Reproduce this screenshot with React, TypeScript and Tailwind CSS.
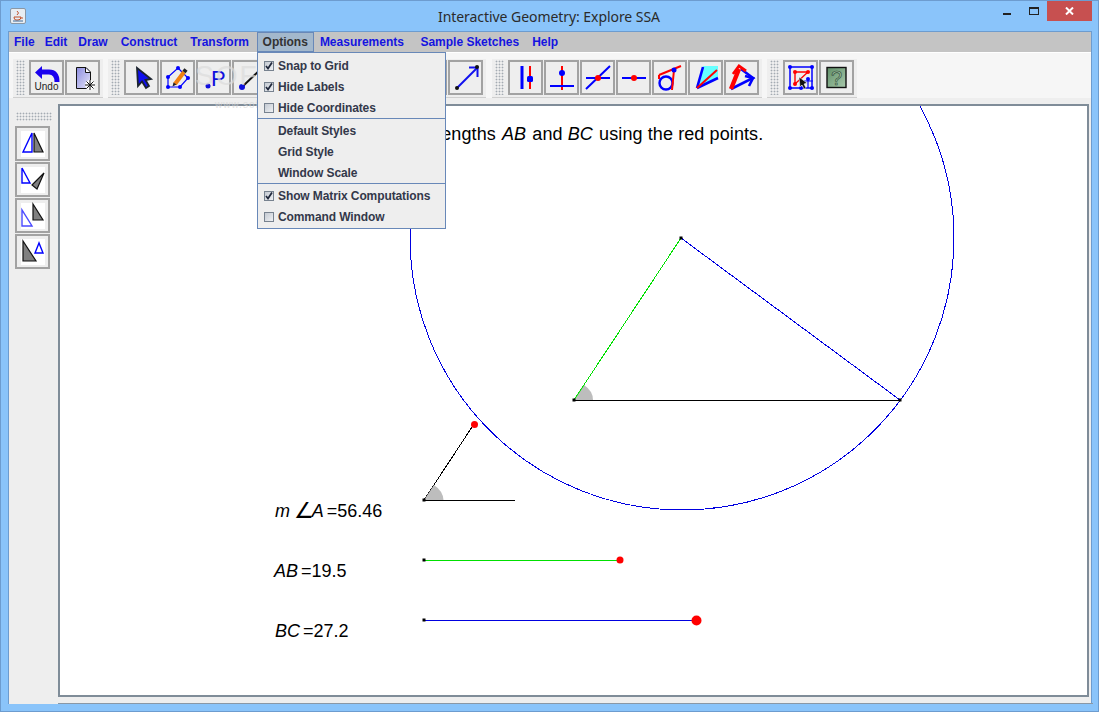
import React from "react";

const BLUE = "#0000ff";
const RED = "#ff0000";

function Icon({ children }: { children: React.ReactNode }) {
  return (
    <svg width="31" height="31" viewBox="0 0 31 31" className="block">
      {children}
    </svg>
  );
}

function ToolButton({ children }: { children?: React.ReactNode }) {
  return (
    <div className="relative h-[35px] w-[35px] shrink-0 border-2 border-[#a2a2a2] bg-[#eeeeee]">
      {children}
    </div>
  );
}

function Handle({ className }: { className: string }) {
  return (
    <div
      className={`bg-[radial-gradient(circle,#a4abb2_0.8px,transparent_1.1px)] bg-[length:3px_3px] ${className}`}
    />
  );
}

function ToolGroup({ children, className = "" }: { children: React.ReactNode; className?: string }) {
  return (
    <div className={`flex h-[40px] items-start gap-[1px] border-b-2 border-[#cfcfcf] bg-[#eeeeee] px-[3px] pt-[1px] ${className}`}>
      <Handle className="mr-[3px] h-[35px] w-[9px] shrink-0" />
      {children}
    </div>
  );
}

function UndoIcon() {
  return (
    <div className="relative h-full w-full">
      <Icon>
        <path d="M11 10 H18 Q26 10 26 20" fill="none" stroke="#1a00ee" strokeWidth="5" />
        <polygon points="4,10.5 11,4 11,17" fill="#1a00ee" />
      </Icon>
      <span className="absolute bottom-[1px] left-0 w-full text-center text-[10px] leading-[11px] text-[#222]">
        Undo
      </span>
    </div>
  );
}

function NewIcon() {
  return (
    <Icon>
      <defs>
        <linearGradient id="docFill" x1="0" y1="0" x2="1" y2="1">
          <stop offset="0" stopColor="#8c8ce0" />
          <stop offset="1" stopColor="#e6e6f8" />
        </linearGradient>
      </defs>
      <path d="M9.5 5.5 H19 L23.5 10 V26.5 H9.5 Z" fill="url(#docFill)" stroke="#111" />
      <path d="M18.5 6 V10.5 H23" fill="#fff" stroke="#111" />
      <circle cx="23" cy="23" r="5" fill="#fff" />
      <path d="M23 18 V28 M18 23 H28 M19.5 19.5 L26.5 26.5 M26.5 19.5 L19.5 26.5" stroke="#111" />
    </Icon>
  );
}

function CursorIcon() {
  return (
    <Icon>
      <path d="M11 6 L12 24 L16 19.5 L20 26 L23 24 L19.5 18 L25 17 Z" fill="#1010ee" stroke="#1c2430" strokeWidth="1.8" />
    </Icon>
  );
}

function PolygonIcon() {
  return (
    <Icon>
      <polygon points="16,6 26,16 18,25 6,25 6,15" fill="none" stroke={BLUE} strokeWidth="1.2" />
      {[[16, 6], [26, 16], [18, 25], [6, 25], [6, 15]].map(([x, y]) => (
        <circle key={`${x}-${y}`} cx={x} cy={y} r="2" fill={BLUE} />
      ))}
      <path d="M13 22 L22 10" stroke="#f08010" strokeWidth="4" />
      <path d="M22 10 L24 7.5" stroke="#222" strokeWidth="4" />
      <polygon points="10.5,24.5 11.5,20.5 14.5,22.5" fill="#222" />
    </Icon>
  );
}

function PointIcon() {
  return (
    <Icon>
      <circle cx="10" cy="24" r="2.5" fill="#1010dd" />
      <text x="13" y="24" fontSize="22" fill="#1010dd" fontFamily="Liberation Sans, sans-serif">
        P
      </text>
    </Icon>
  );
}

function LineIcon() {
  return (
    <Icon>
      <path d="M8 25 L30 4" stroke="#111" strokeWidth="2" />
      <circle cx="8" cy="25" r="3" fill="#1010dd" />
    </Icon>
  );
}

function ArrowIcon() {
  return (
    <Icon>
      <path d="M7 26 L27 6" stroke="#1010ee" strokeWidth="2" />
      <path d="M19 5.5 H27.5 V15" fill="none" stroke="#1010ee" strokeWidth="2" />
      <circle cx="7" cy="26" r="2" fill="#111" />
      <circle cx="27" cy="5" r="2" fill="#111" />
    </Icon>
  );
}

function ParallelIcon() {
  return (
    <Icon>
      <path d="M12 4 V27" stroke={BLUE} strokeWidth="3" />
      <path d="M20 4 V27" stroke={RED} strokeWidth="2" />
      <rect x="17" y="14" width="6" height="6" rx="1.5" fill={BLUE} />
    </Icon>
  );
}

function PerpIcon() {
  return (
    <Icon>
      <path d="M16 4 V28" stroke={RED} strokeWidth="2" />
      <path d="M4 24 H28" stroke={BLUE} strokeWidth="2" />
      <circle cx="16" cy="11" r="3" fill={BLUE} />
    </Icon>
  );
}

function IntersectIcon() {
  return (
    <Icon>
      <path d="M4 16 H28 M4 27 L28 4" stroke={BLUE} strokeWidth="2" />
      <circle cx="16" cy="16" r="3" fill={RED} />
    </Icon>
  );
}

function MidpointIcon() {
  return (
    <Icon>
      <path d="M4 16 H28" stroke={BLUE} strokeWidth="2" />
      <circle cx="16" cy="16" r="3" fill={RED} />
    </Icon>
  );
}

function TangentIcon() {
  return (
    <Icon>
      <circle cx="12" cy="21" r="6.5" fill="none" stroke={BLUE} strokeWidth="2.4" />
      <path d="M5 13 L27 4 M5 13 V17 M20 8 L18 28" stroke={RED} strokeWidth="2" fill="none" />
      <circle cx="20" cy="8" r="2.5" fill={BLUE} />
    </Icon>
  );
}

function BisectorIcon() {
  return (
    <Icon>
      <polygon points="7,26 13,4 28,4 28,16" fill="#66ffff" />
      <path d="M7 26 L13 5 M7 26 L28 16" stroke={BLUE} strokeWidth="2.6" />
      <path d="M7 26 L27 8" stroke={RED} strokeWidth="2" />
    </Icon>
  );
}

function VectorSumIcon() {
  return (
    <Icon>
      <path d="M5 27 L27 16 L15 7" fill="none" stroke={BLUE} strokeWidth="2.6" />
      <path d="M19 14 L27 16 L23 24" fill="none" stroke={BLUE} strokeWidth="2.6" />
      <path d="M5 27 L13 7" stroke={RED} strokeWidth="4.4" />
      <path d="M7 12 L13 4 L20 9" fill="none" stroke={RED} strokeWidth="2.8" />
    </Icon>
  );
}

function MatrixIcon() {
  return (
    <Icon>
      <rect x="5" y="5" width="22" height="21" fill="none" stroke={BLUE} strokeWidth="1.5" />
      {[[5, 5], [27, 5], [5, 26], [27, 26], [16, 26]].map(([x, y]) => (
        <circle key={`${x}-${y}`} cx={x} cy={y} r="2" fill={BLUE} />
      ))}
      <polygon points="10,10 23,10 10,22" fill="none" stroke={RED} strokeWidth="1.4" />
      {[[10, 10], [23, 10], [10, 22]].map(([x, y]) => (
        <circle key={`${x}-${y}`} cx={x} cy={y} r="2" fill={RED} />
      ))}
      <path d="M23 26 V17 M19 19 H28" stroke={BLUE} strokeWidth="1.2" />
      <circle cx="23" cy="17" r="2" fill={BLUE} />
      <path d="M14 15 L15 25 L17 23 L19 27 L21 26 L19 22 L22 21 Z" fill="#111" stroke="#fff" strokeWidth="0.5" />
    </Icon>
  );
}

function HelpIcon() {
  return (
    <Icon>
      <defs>
        <linearGradient id="helpFill" x1="0" y1="0" x2="1" y2="1">
          <stop offset="0" stopColor="#5f8f68" />
          <stop offset="1" stopColor="#a9c9ac" />
        </linearGradient>
      </defs>
      <rect x="6" y="5.5" width="19" height="20" fill="url(#helpFill)" stroke="#111" strokeWidth="1.4" />
      <text x="15.5" y="23" textAnchor="middle" fontSize="20" fill="#9dc0a0" stroke="#2c4634" strokeWidth="0.6" fontFamily="Liberation Sans, sans-serif">
        ?
      </text>
    </Icon>
  );
}

function SideIcon({ points }: { points: { tri: string; gray?: boolean; faint?: boolean }[] }) {
  return (
    <Icon>
      <rect x="4" y="3" width="24" height="26" fill="#fff" />
      {points.map((p) => (
        <polygon
          key={p.tri}
          points={p.tri}
          fill={p.gray ? "#808080" : "none"}
          stroke={p.gray ? "#111" : p.faint ? "#4a4aff" : BLUE}
          strokeWidth={p.gray ? 1.2 : 1.4}
        />
      ))}
    </Icon>
  );
}

function CheckBox({ checked }: { checked?: boolean }) {
  return (
    <span className="relative block h-[10px] w-[10px] border border-[#77828f] bg-[linear-gradient(135deg,#c4cad2,#eef0f3)]">
      {checked && (
        <svg width="8" height="8" viewBox="0 0 8 8" className="absolute left-0 top-0">
          <path d="M1 4 L3 6.5 L7 0.5" fill="none" stroke="#20283c" strokeWidth="1.7" />
        </svg>
      )}
    </span>
  );
}

function MenuItem({ label, check }: { label: string; check?: "on" | "off" }) {
  return (
    <div className="flex h-[21px] items-center pl-[6px] text-[#33384a]">
      <span className="flex w-[14px] shrink-0 justify-start">
        {check && <CheckBox checked={check === "on"} />}
      </span>
      <span>{label}</span>
    </div>
  );
}

export default function App() {
  return (
    <div className="relative h-[712px] w-[1099px] overflow-hidden border border-[#6d9ccf] bg-[#8ac4fa] font-['Liberation_Sans',sans-serif]">
      {/* title bar */}
      <div className="relative flex h-[30px] items-center">
        <div className="ml-[9px] flex h-[16px] w-[16px] items-center justify-center rounded-[2px] border border-[#8a97a5] bg-[#e8edf2]">
          <svg width="12" height="12" viewBox="0 0 12 12">
            <path d="M5 1 Q8 3 5 5 M2 7 H9 Q9 10 6 10 H4 Q2 10 2 7 M9 8 H11" fill="none" stroke="#c0502a" strokeWidth="1" />
            <path d="M1 11 H11" stroke="#3c6a9a" strokeWidth="1" />
          </svg>
        </div>
        <div className="absolute left-[437px] top-[6px] font-['Noto_Sans',sans-serif] text-[14px] leading-[20px] tracking-[-0.06px] text-[#2b2b2b]">
          Interactive Geometry: Explore SSA
        </div>
        <div className="absolute left-[1002px] top-[12px] h-[2px] w-[8px] bg-[#222]" />
        <div className="absolute left-[1028px] top-[6px] h-[8px] w-[10px] border border-t-2 border-[#222]" />
        <div className="absolute left-[1046px] top-0 flex h-[20px] w-[45px] items-center justify-center bg-[#c75050]">
          <svg width="9" height="8" viewBox="0 0 9 8">
            <path d="M1 0.5 L8 7.5 M8 0.5 L1 7.5" stroke="#fff" strokeWidth="2" />
          </svg>
        </div>
      </div>

      {/* app content */}
      <div className="ml-[7px] flex h-[673px] w-[1084px] flex-col border border-b-0 border-[#6d9ccf] bg-[#eeeeee]">
        <div className="flex h-[20px] shrink-0 items-stretch bg-[#c4c4c4] text-[12px] font-bold leading-[20px] text-[#1414e0]">
          <div className="pl-[5px] pr-[3.5px]">File</div>
          <div className="pl-[6.5px] pr-[4.5px]">Edit</div>
          <div className="px-[6.5px]">Draw</div>
          <div className="px-[6.5px]">Construct</div>
          <div className="pl-[6.5px] pr-[7.5px]">Transform</div>
          <div className="border border-[#6888b8] bg-[#a3b8cc] px-[5px] leading-[18px] text-[#333]">Options</div>
          <div className="pl-[6px] pr-[10px]">Measurements</div>
          <div className="px-[6.5px]">Sample Sketches</div>
          <div className="px-[6.5px]">Help</div>
        </div>

        {/* toolbar */}
        <div className="relative flex h-[52px] shrink-0 gap-[5px] border-t border-white bg-[#f6f6f6] pl-[4px] pt-[6px]">
          <ToolGroup>
            <ToolButton><UndoIcon /></ToolButton>
            <ToolButton><NewIcon /></ToolButton>
          </ToolGroup>
          <ToolGroup>
            <ToolButton><CursorIcon /></ToolButton>
            <ToolButton><PolygonIcon /></ToolButton>
            <ToolButton><PointIcon /></ToolButton>
            <ToolButton><LineIcon /></ToolButton>
            <ToolButton />
            <ToolButton />
            <ToolButton />
            <ToolButton />
            <ToolButton />
            <ToolButton><ArrowIcon /></ToolButton>
          </ToolGroup>
          <ToolGroup className="ml-[1px]">
            <ToolButton><ParallelIcon /></ToolButton>
            <ToolButton><PerpIcon /></ToolButton>
            <ToolButton><IntersectIcon /></ToolButton>
            <ToolButton><MidpointIcon /></ToolButton>
            <ToolButton><TangentIcon /></ToolButton>
            <ToolButton><BisectorIcon /></ToolButton>
            <ToolButton><VectorSumIcon /></ToolButton>
          </ToolGroup>
          <ToolGroup>
            <ToolButton><MatrixIcon /></ToolButton>
            <ToolButton><HelpIcon /></ToolButton>
          </ToolGroup>
          <div className="absolute inset-x-0 bottom-0 h-[6px] bg-[#eeeeee]" />
          {/* watermark */}
          <span className="absolute left-[186px] top-[6px] text-[28px] leading-[34px] tracking-[2px] text-[#dcdcdc] opacity-70">
            SOFTPEDIA
          </span>
        </div>

        <div className="flex min-h-0 flex-1">
          {/* left tool rail */}
          <div className="flex w-[49px] shrink-0 flex-col gap-[1px] pl-[6px] pt-[8px]">
            <Handle className="mb-[4px] ml-[1px] h-[9px] w-[36px]" />
            <ToolButton>
              <SideIcon points={[{ tri: "15,5 6,24 15,24" }, { tri: "17,5 17,24 26,24", gray: true }]} />
            </ToolButton>
            <ToolButton>
              <SideIcon points={[{ tri: "5,4 5,19 13,19" }, { tri: "27,9 15,21 20,25", gray: true }]} />
            </ToolButton>
            <ToolButton>
              <SideIcon points={[{ tri: "5,10 5,26 15,26", faint: true }, { tri: "16,4 16,20 26,20", gray: true }]} />
            </ToolButton>
            <ToolButton>
              <SideIcon points={[{ tri: "6,5 6,25 19,25", gray: true }, { tri: "22,7 18,17 26,17" }]} />
            </ToolButton>
          </div>

          {/* sketch canvas */}
          <div className="flex flex-1 flex-col">
            <div className="relative h-[593px] w-[1031px] overflow-hidden border-2 border-[#7f8c98] bg-white text-[18px] leading-[22px] text-black">
              <svg width="1027" height="589" viewBox="60 106 1027 589" className="absolute left-0 top-0">
                <g shapeRendering="crispEdges" fill="none">
                  <circle cx="682" cy="238" r="272" stroke="#0000e0" />
                  <line x1="574" y1="400" x2="900" y2="400" stroke="#000" />
                  <line x1="574" y1="400" x2="681" y2="238" stroke="#00e000" />
                  <line x1="681" y1="238" x2="900" y2="400" stroke="#0000e0" />
                  <line x1="424" y1="500" x2="474" y2="424" stroke="#000" />
                  <line x1="424" y1="500" x2="515" y2="500" stroke="#000" />
                  <line x1="424" y1="560" x2="620" y2="560" stroke="#00e000" />
                  <line x1="424" y1="620" x2="696" y2="620" stroke="#0000e0" />
                </g>
                <path d="M574 400 L584 385 Q593 391 593 400 Z" fill="#bdbdbd" />
                <path d="M424 500 L434 485 Q443 491 443.500 500 Z" fill="#bdbdbd" />
                <line x1="574" y1="400" x2="584" y2="385" stroke="#00e000" />
                {[[574, 400], [681, 238], [900, 400], [424, 500], [424, 560], [424, 620]].map(([x, y]) => (
                  <rect key={`${x}-${y}`} x={x - 1.5} y={y - 1.5} width="3" height="3" fill="#000" />
                ))}
                <circle cx="474.500" cy="424.500" r="3.500" fill={RED} />
                <circle cx="620" cy="560" r="3.500" fill={RED} />
                <circle cx="696.500" cy="620.500" r="5" fill={RED} />
              </svg>

              <div className="absolute left-[291px] top-[17px] whitespace-nowrap tracking-[0.1px]">
                Adjust the lengths <i className="mx-[1px]">AB</i> and <i className="mr-[1px]">BC</i> using the red points.
              </div>
              <div className="absolute left-[215px] top-[394px] flex whitespace-nowrap">
                <i>m</i>
                <span className="ml-[4px] font-['DejaVu_Sans',sans-serif] text-[22px] leading-[22px]">∠</span>
                <i className="ml-[-2px]">A</i>
                <span className="ml-[3px]">=56.46</span>
              </div>
              <div className="absolute left-[214px] top-[454px] flex whitespace-nowrap">
                <i>AB</i>
                <span className="ml-[3px]">=19.5</span>
              </div>
              <div className="absolute left-[215px] top-[514px] flex whitespace-nowrap">
                <i>BC</i>
                <span className="ml-[3px]">=27.2</span>
              </div>
            </div>
            <div className="mr-[-2px] mt-[6px] h-[1px] bg-[#8a98a6]" />
          </div>
        </div>
      </div>

      {/* watermark url, faint over the canvas edge */}
      <span className="absolute left-[214px] top-[98px] text-[10px] leading-[12px] tracking-[1px] text-[#d8d8d8] opacity-70">
        www.softpedia.com
      </span>

      {/* open Options menu */}
      <div className="absolute left-[256px] top-[51px] w-[189px] border border-[#6888b8] bg-[#eeeeee] pb-[1px] pt-[2px] text-[12px] font-bold tracking-[-0.1px]">
        <MenuItem label="Snap to Grid" check="on" />
        <MenuItem label="Hide Labels" check="on" />
        <MenuItem label="Hide Coordinates" check="off" />
        <div className="mb-[1px] h-[1px] bg-[#6888b8]" />
        <MenuItem label="Default Styles" />
        <MenuItem label="Grid Style" />
        <MenuItem label="Window Scale" />
        <div className="mb-[1px] h-[1px] bg-[#6888b8]" />
        <MenuItem label="Show Matrix Computations" check="on" />
        <MenuItem label="Command Window" check="off" />
      </div>
    </div>
  );
}
